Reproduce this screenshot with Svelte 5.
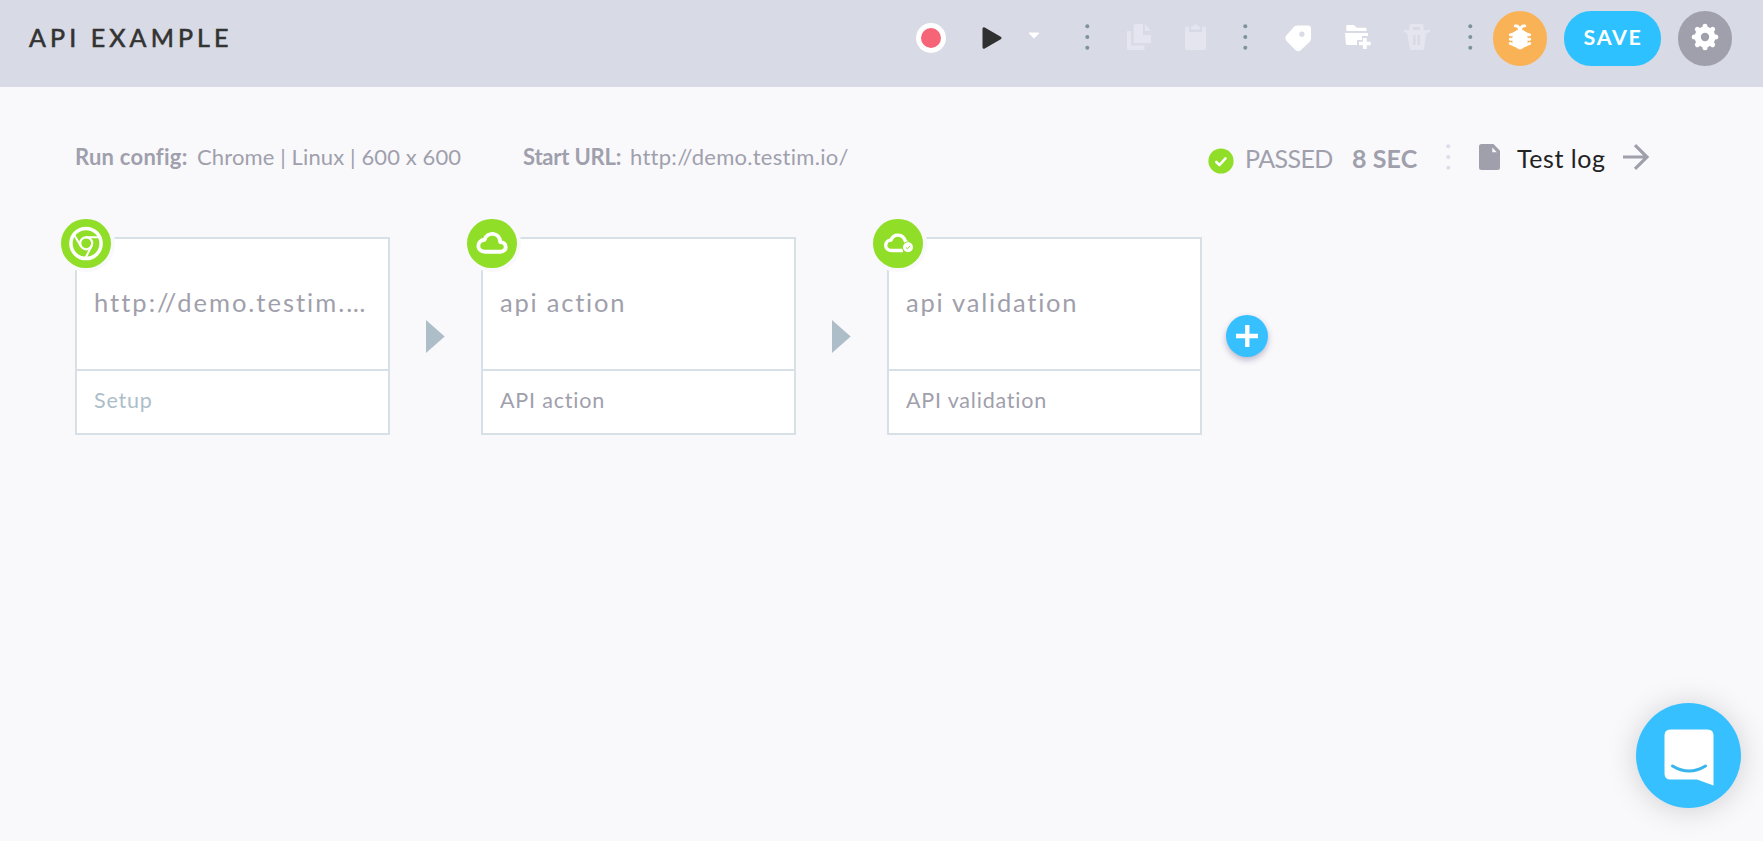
<script>
  const steps = [
    { title: 'http://demo.testim.io/', shown: 'http://demo.testim.…', kind: 'Setup', icon: 'chrome', muted: true },
    { title: 'api action', shown: 'api action', kind: 'API action', icon: 'cloud', muted: false },
    { title: 'api validation', shown: 'api validation', kind: 'API validation', icon: 'cloudCheck', muted: false }
  ];
</script>

{#snippet dots(cls)}
  <svg class="dots {cls}" width="4" height="30" viewBox="0 0 4 30">
    <circle cx="2.300" cy="3.300" r="2" /><circle cx="2.300" cy="14" r="2" /><circle cx="2.300" cy="24.800" r="2" />
  </svg>
{/snippet}

<div class="page">
  <header>
    <h1>API EXAMPLE</h1>
    <div class="tools">
      <svg class="rec" width="30" height="30" viewBox="0 0 30 30"><circle cx="15" cy="15" r="15" fill="#fff" /><circle cx="15" cy="15" r="10" fill="#f66577" /></svg>
      <svg class="play" width="20" height="24" viewBox="0 0 20 24"><path d="M2 2.800v18.400L18 12z" fill="#303030" stroke="#303030" stroke-width="3" stroke-linejoin="round" /></svg>
      <svg class="caret" width="12" height="8" viewBox="0 0 12 8"><path d="M1 1h10L6 6.200z" fill="#fff" stroke="#fff" stroke-linejoin="round" /></svg>
      {@render dots('d1')}
      <svg class="copy faint" width="24" height="26" viewBox="0 0 24 26"><path d="M8 0h8v11h8v8H6.600V1.200Q6.600 0 8 0zM18 0l6 7h-6zM0 7h4v14.500h13.500V26H1.500Q0 26 0 24.500z" /></svg>
      <svg class="clip faint" width="21" height="26" viewBox="0 0 21 26"><path d="M1.500 2.800H4V8h13V2.800h2.500Q21 2.800 21 4.500v19.800Q21 26 19.500 26h-18Q0 26 0 24.300V4.500Q0 2.800 1.500 2.800zM6 5.500V3l3-1.500Q10.500-1 12 1.500L15 3v2.500z" /></svg>
      {@render dots('d2')}
      <svg class="tag" width="27" height="27" viewBox="0 0 27 27"><path fill="#fff" fill-rule="evenodd" d="M9.500 1.300Q11 .5 12.500.5H23q3 0 3 3V13.500q0 1.600-1 3L16 25q-3 2.400-5.700 0L1.500 16q-2.400-2.800 0-5.700zM16.900 6.600a2.600 2.600 0 1 0 0 5.200a2.600 2.600 0 0 0 0-5.200z" /></svg>
      <svg class="folder" width="26" height="25" viewBox="0 0 26 25"><path fill="#fff" d="M1.300 5V1.200Q1.300 0 2.500 0h6.300l3 2.800h8.700q1 0 1 1V6H1.300zM0 8h23v3h-6v4h-5v5H2.500Q1 20 .8 18.500zM18 13h3.700v3.700h4v3.600h-4V24H18v-3.700h-4v-3.600h4z" /></svg>
      <svg class="trash faint" width="26" height="26" viewBox="0 0 26 26"><path fill-rule="evenodd" d="M5.500 6V1.500Q5.500 0 7 0h11q1.500 0 1.500 1.500V6H26v2l-3.500 1L20 24.500q-.4 1.500-1.800 1.500H7.500q-1.500 0-1.700-1.500L3 9 0 8V6zM9 3v3h7V3zM9 11v10h7V11z" /><path d="M11.500 11h2v10h-2z" /></svg>
      {@render dots('d3')}
      <button class="round bug" aria-label="Report bug">
        <svg width="24" height="27" viewBox="0 0 24 27"><path fill="#fff" d="M12 4.500l3 1.500 4.500 3V19l-1.500 3-3 2.300q-3 2.200-6 0L6 22l-1.500-3V9L9 6z" /><path fill="none" stroke="#fff" stroke-width="2.900" stroke-linecap="round" d="M7.300 1.900q3.500-.6 4.700 4.500q1.200-5.100 4.700-4.500M2.300 10.800L6 10M2.300 15.300H6M2.300 19.500L7 21.300M21.700 10.800L18 10M21.700 15.300H18M21.700 19.500L17 21.300" /></svg>
      </button>
      <button class="save">SAVE</button>
      <button class="round gear" aria-label="Settings">
        <svg width="28" height="28" viewBox="0 0 28 28"><circle cx="14" cy="14" r="7.300" fill="none" stroke="#fff" stroke-width="6.200" />
          {#each [0, 45, 90, 135, 180, 225, 270, 315] as a}
            <path transform="rotate({a} 14 14)" d="M14 6V3.200" stroke="#fff" stroke-width="5" stroke-linecap="round" />
          {/each}
        </svg>
      </button>
    </div>
  </header>

  <section class="info">
    <span class="cfg"><b class="k1">Run config:</b><span class="v1">Chrome | Linux | 600 x 600</span></span>
    <span class="url"><b class="k2">Start URL:</b><span class="v2">http://demo.testim.io/</span></span>
    <div class="result">
      <svg class="ok" width="26" height="26" viewBox="0 0 26 26"><circle cx="13" cy="13" r="12.600" fill="#90de28" /><path d="M8.300 14l3.200 3 6-6.600" fill="none" stroke="#fff" stroke-width="2.600" stroke-linecap="round" stroke-linejoin="round" /></svg>
      <span class="passed">PASSED</span>
      <b class="sec">8 SEC</b>
      {@render dots('d4')}
      <svg class="doc" width="21" height="26" viewBox="0 0 21 26"><path fill="#9fa0ac" fill-rule="evenodd" d="M2.500 0h12L21 6.800v16.700q0 2.500-2.500 2.500h-16Q0 26 0 23.500v-21Q0 0 2.500 0zM13.300 3.500v4.700h4.500z" /></svg>
      <span class="log">Test log</span>
      <svg class="go" width="26" height="26" viewBox="0 0 26 26"><path d="M0 13h23.500M12 1.200L24 13 12 24.800" fill="none" stroke="#9fa0ac" stroke-width="3.200" /></svg>
    </div>
  </section>

  <main>
    {#each steps as s, i}
      <article class="card">
        <span class="badge">
          {#if s.icon === 'chrome'}
            <svg width="50" height="49" viewBox="0 0 50 49" fill="none" stroke="#fff"><circle cx="25" cy="24.500" r="15.100" stroke-width="3.500" /><circle cx="25.200" cy="24.300" r="6" stroke-width="2.200" /><path stroke-width="2" d="M24.800 18.300H38.500M20.200 27.700L13.500 16.500M30.700 26.800L24.500 39" /></svg>
          {:else if s.icon === 'cloud'}
            <svg width="50" height="49" viewBox="0 0 50 49" fill="none" stroke="#fff" stroke-width="3.900" stroke-linejoin="round"><path d="M18 32.700H33.500C40.500 32.700 40.500 23.400 33.300 23C32.500 12.800 20 12.300 17.500 20.800C9.200 21.500 9.200 32.700 18 32.700z" /></svg>
          {:else}
            <svg width="50" height="49" viewBox="0 0 50 49"><path d="M30 31.500H19C10.500 31.500 11 21.500 18 21C20.500 14.500 30 14 32.500 22.500L35.500 24" fill="none" stroke="#fff" stroke-width="3.400" /><circle cx="35" cy="28.200" r="6" fill="#90de28" /><circle cx="35" cy="28.200" r="5" fill="#fff" /><path d="M33 28.500l1.500 1.300 2.600-3" fill="none" stroke="#90de28" stroke-width="1" /></svg>
          {/if}
        </span>
        <div class="name" class:long={s.shown !== s.title} title={s.title}>{s.shown}</div>
        <div class="kind" class:muted={s.muted}>{s.kind}</div>
      </article>
      {#if i < steps.length - 1}
        <svg class="arrow" width="19" height="33" viewBox="0 0 19 33"><path d="M0 0L18.700 16.500 0 33z" fill="#aebec9" /></svg>
      {/if}
    {/each}
    <button class="add" aria-label="Add step"><svg width="22" height="22" viewBox="0 0 22 22"><path d="M11.300 0v22M0 11h22" stroke="#fff" stroke-width="4.300" /></svg></button>
  </main>

  <button class="chat" aria-label="Open chat">
    <svg width="52" height="60" viewBox="0 0 52 60"><path d="M7.500 1.500H44.500Q50.500 1.500 50.500 7.500V57.500L34 51.500H7.500Q1.500 51.500 1.500 45.500V7.500Q1.500 1.500 7.500 1.500z" fill="#fff" /><path d="M9.500 38Q26 48 42.500 38" fill="none" stroke="#37b5ec" stroke-width="3" stroke-linecap="round" /></svg>
  </button>
</div>

<style>
  :global(body) { background: #f9f9fc; }
  * { box-sizing: border-box; }
  .page { position: relative; width: 100%; height: 841px; overflow: hidden; background: #f9f9fc; font-family: Lato, "Open Sans", sans-serif; font-variant-ligatures: none; color: #9fa0ac; white-space: nowrap; }
  svg { display: block; flex: none; overflow: visible; }
  button { border: 0; padding: 0; font: inherit; flex: none; }
  header { display: flex; justify-content: space-between; height: 87px; padding: 0 31px 11px 29px; align-items: center; background: #d8dae5; }
  h1 { margin: -2px 0 0; font-size: 25px; line-height: 30px; font-weight: 400; letter-spacing: 4.100px; color: #333; -webkit-text-stroke: .6px #333; }
  .tools { display: flex; align-items: center; }
  .faint { fill: #e4e5ee; }
  .dots { fill: #7d929e; }
  .play { margin-left: 36px; }
  .caret { margin-left: 26px; margin-top: -5px; }
  .d1 { margin-left: 45px; }
  .copy { margin-left: 38px; margin-top: -2px; }
  .clip { margin-left: 34px; margin-top: -2px; }
  .d2 { margin-left: 37px; }
  .tag { margin-left: 38px; }
  .folder { margin-left: 33px; margin-top: -2px; }
  .trash { margin-left: 33px; margin-top: -2px; }
  .d3 { margin-left: 38px; }
  .round { display: flex; align-items: center; justify-content: center; width: 54px; height: 55px; border-radius: 27px; }
  .round svg { margin-top: -2px; }
  .bug { margin-left: 21px; background: #fab257; }
  .save { width: 97px; height: 55px; margin: 0 17px; padding-bottom: 2px; border-radius: 27px; background: #2dc1ff; color: #fff; font-size: 21.500px; font-weight: 700; letter-spacing: 1.600px; text-indent: 1px; }
  .gear { background: #9fa0ac; }

  .info { display: flex; align-items: center; height: 60px; margin-top: 41px; padding: 0 114px 0 75px; font-size: 22px; line-height: 28px; }
  .info b { font-weight: 700; }
  .cfg, .url { display: flex; margin-top: -2px; }
  .cfg { width: 448px; }
  .k1 { width: 122px; letter-spacing: .25px; }
  .k2 { width: 107px; letter-spacing: -.2px; }
  .v1 { letter-spacing: .12px; }
  .v2 { letter-spacing: .28px; }
  .result { display: flex; align-items: center; margin-left: auto; font-size: 25px; }
  .ok { margin-top: 5px; }
  .passed { width: 107px; margin-left: 11px; letter-spacing: -.6px; }
  .sec { width: 65px; letter-spacing: .1px; }
  .d4 { margin-left: 29px; fill: #dcdde8; }
  .doc { margin-left: 29px; margin-top: -2px; }
  .log { width: 89px; margin-left: 17px; letter-spacing: .55px; color: #222; }
  .go { margin-left: 17px; margin-top: -2px; }

  main { display: flex; align-items: center; width: max-content; height: 198px; margin: 49px 0 0 75px; }
  .card { position: relative; width: 315px; height: 198px; border: 2px solid #d8e0e7; background: #fff; }
  .badge { position: absolute; left: -16px; top: -20px; width: 50px; height: 49px; border-radius: 25px; background: #90de28; box-shadow: 0 0 0 4px #f9f9fc; }
  .name { height: 132px; padding: 45px 0 0 17px; border-bottom: 2px solid #d8e0e7; font-size: 25.500px; line-height: 36px; letter-spacing: 1.780px; }
  .name.long { letter-spacing: 2px; }
  .kind { padding: 13px 0 0 17px; font-size: 21.500px; line-height: 32px; letter-spacing: .8px; }
  .muted { color: #aebec9; }
  .arrow { margin: 0 36px; }
  .add { display: flex; align-items: center; justify-content: center; width: 42px; height: 42px; margin-left: 24px; border-radius: 50%; background: #37c0ff; box-shadow: 0 3px 6px rgba(40, 30, 80, .3); }
  .chat { position: absolute; left: 1636px; top: 703px; display: flex; align-items: center; justify-content: center; width: 105px; height: 105px; border-radius: 50%; background: #37c0ff; box-shadow: 0 2px 30px rgba(0, 0, 0, .17); }
  .chat svg { margin-top: 4px; }
</style>
